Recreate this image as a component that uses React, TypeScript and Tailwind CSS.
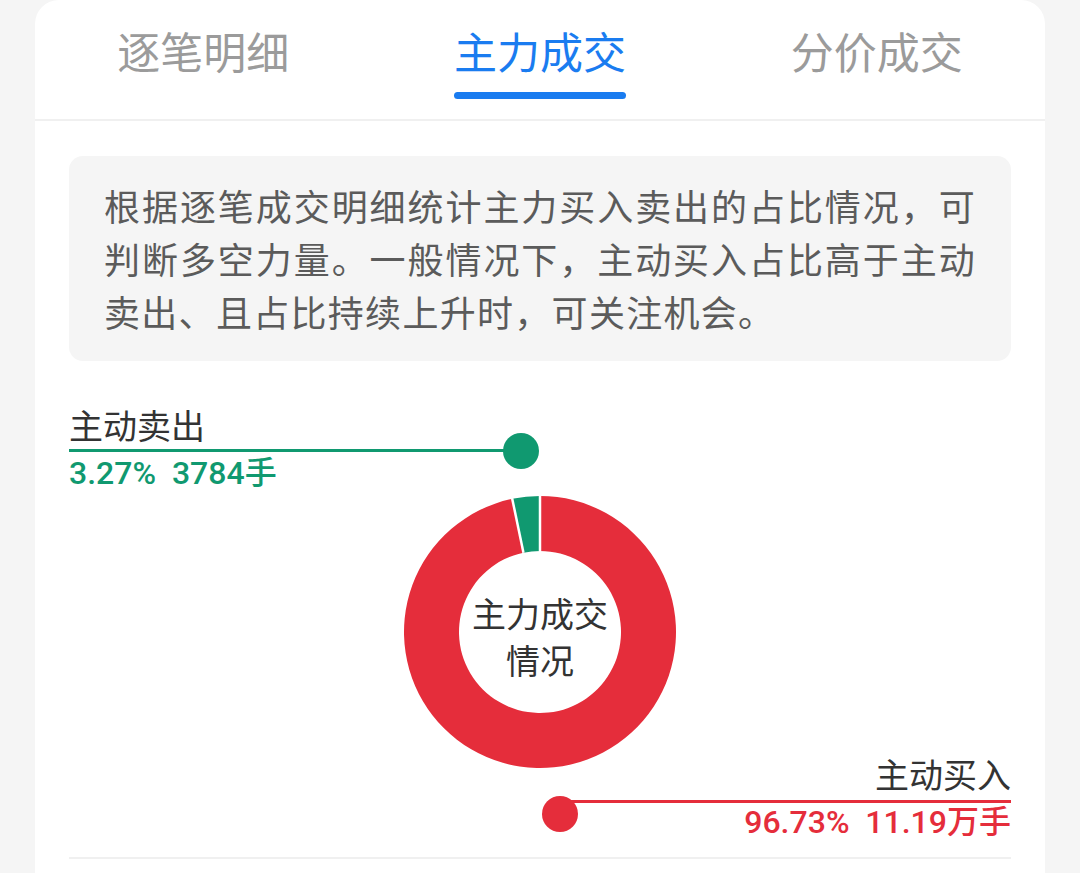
import { useState } from 'react';

const RED = '#e52d3b';
const GREEN = '#109970';

function Donut() {
  const cx = 136;
  const cy = 136;
  const R = 136;
  const r = 81;
  const sellPct = 3.27;

  const pt = (deg: number, rad: number) => {
    const a = (deg * Math.PI) / 180;
    return [cx + rad * Math.cos(a), cy + rad * Math.sin(a)];
  };

  const sector = (from: number, to: number) => {
    const large = to - from > 180 ? 1 : 0;
    const [x1, y1] = pt(from, R);
    const [x2, y2] = pt(to, R);
    const [x3, y3] = pt(to, r);
    const [x4, y4] = pt(from, r);
    return `M${x1} ${y1} A${R} ${R} 0 ${large} 1 ${x2} ${y2} L${x3} ${y3} A${r} ${r} 0 ${large} 0 ${x4} ${y4} Z`;
  };

  const start = -90 - (sellPct / 100) * 360;
  const [ax1, ay1] = pt(-90, r);
  const [ax2, ay2] = pt(-90, R + 1);
  const [bx1, by1] = pt(start, r);
  const [bx2, by2] = pt(start, R + 1);

  return (
    <div className="relative w-[272px] h-[272px] mx-auto">
      <svg width="272" height="272" viewBox="0 0 272 272">
        <path d={sector(-90, start + 360)} fill={RED} />
        <path d={sector(start, -90)} fill={GREEN} />
        <line x1={ax1} y1={ay1} x2={ax2} y2={ay2} stroke="#fff" strokeWidth="2.5" />
        <line x1={bx1} y1={by1} x2={bx2} y2={by2} stroke="#fff" strokeWidth="2.5" />
      </svg>
      <div className="absolute inset-0 flex flex-col items-center justify-center pt-2 text-[34px] leading-[47px] text-[#333]">
        <span>主力成交</span>
        <span>情况</span>
      </div>
    </div>
  );
}

export default function App() {
  const [active, setActive] = useState('主力成交');
  const tabs = ['逐笔明细', '主力成交', '分价成交'];

  return (
    <div className="min-h-[873px] bg-[#f5f5f5] font-['Noto_Sans_CJK_SC',sans-serif] overflow-hidden">
      <div className="mx-[35px] min-h-[873px] bg-white rounded-t-[24px]">
        {/* Tabs */}
        <div className="grid grid-cols-3 h-[121px] border-b-2 border-[#f0f0f0]">
          {tabs.map((tab) => (
            <button key={tab} onClick={() => setActive(tab)} className="flex justify-center pt-[24px]">
              <div className="flex flex-col">
                <span className={`text-[43px] leading-[52px] ${active === tab ? 'text-[#1a7cf0]' : 'text-[#9b9b9b]'}`}>
                  {tab}
                </span>
                <span className={`mt-[16px] h-[7px] rounded-full ${active === tab ? 'bg-[#1a7cf0]' : 'bg-transparent'}`} />
              </div>
            </button>
          ))}
        </div>

        <div className="px-[34px]">
          {/* Description */}
          <div className="mt-[35px] bg-[#f5f5f5] rounded-[14px] px-[35px] py-[23px] text-[36px] leading-[53px] tracking-[1.3px] text-[#5b5b5b]">
            <div className="text-justify [text-align-last:justify]">根据逐笔成交明细统计主力买入卖出的占比情况，可</div>
            <div className="text-justify [text-align-last:justify]">判断多空力量。一般情况下，主动买入占比高于主动</div>
            <div>卖出、且占比持续上升时，可关注机会。</div>
          </div>

          {/* Chart */}
          <div className="mt-[44px]">
            <div className="w-[470px]">
              <div className="text-[34px] leading-[40px] text-[#333]">主动卖出</div>
              <div className="relative mt-[4px] h-[3px] w-[452px] bg-[#109970]">
                <span className="absolute right-[-18px] top-1/2 -translate-y-1/2 w-[36px] h-[36px] rounded-full bg-[#109970]" />
              </div>
              <div className="mt-[3px] font-['Roboto','Noto_Sans_CJK_SC',sans-serif] font-medium text-[32px] leading-[36px] text-[#109970] whitespace-pre">
                3.27%  3784手
              </div>
            </div>

            <div className="mt-[5px]">
              <Donut />
            </div>

            <div className="-mt-[14px] ml-auto w-[469px]">
              <div className="text-right text-[34px] leading-[40px] text-[#333]">主动买入</div>
              <div className="relative mt-[6px] ml-[18px] h-[3px] bg-[#e52d3b]">
                <span className="absolute left-[-18px] top-[-4px] w-[36px] h-[36px] rounded-full bg-[#e52d3b]" />
              </div>
              <div className="mt-[1px] text-right font-['Roboto','Noto_Sans_CJK_SC',sans-serif] font-medium text-[32px] leading-[36px] text-[#e52d3b] whitespace-pre">
                96.73%  11.19万手
              </div>
            </div>

            <div className="mt-[17px] h-[2px] bg-[#f0f0f0]" />
          </div>
        </div>
      </div>
    </div>
  );
}
